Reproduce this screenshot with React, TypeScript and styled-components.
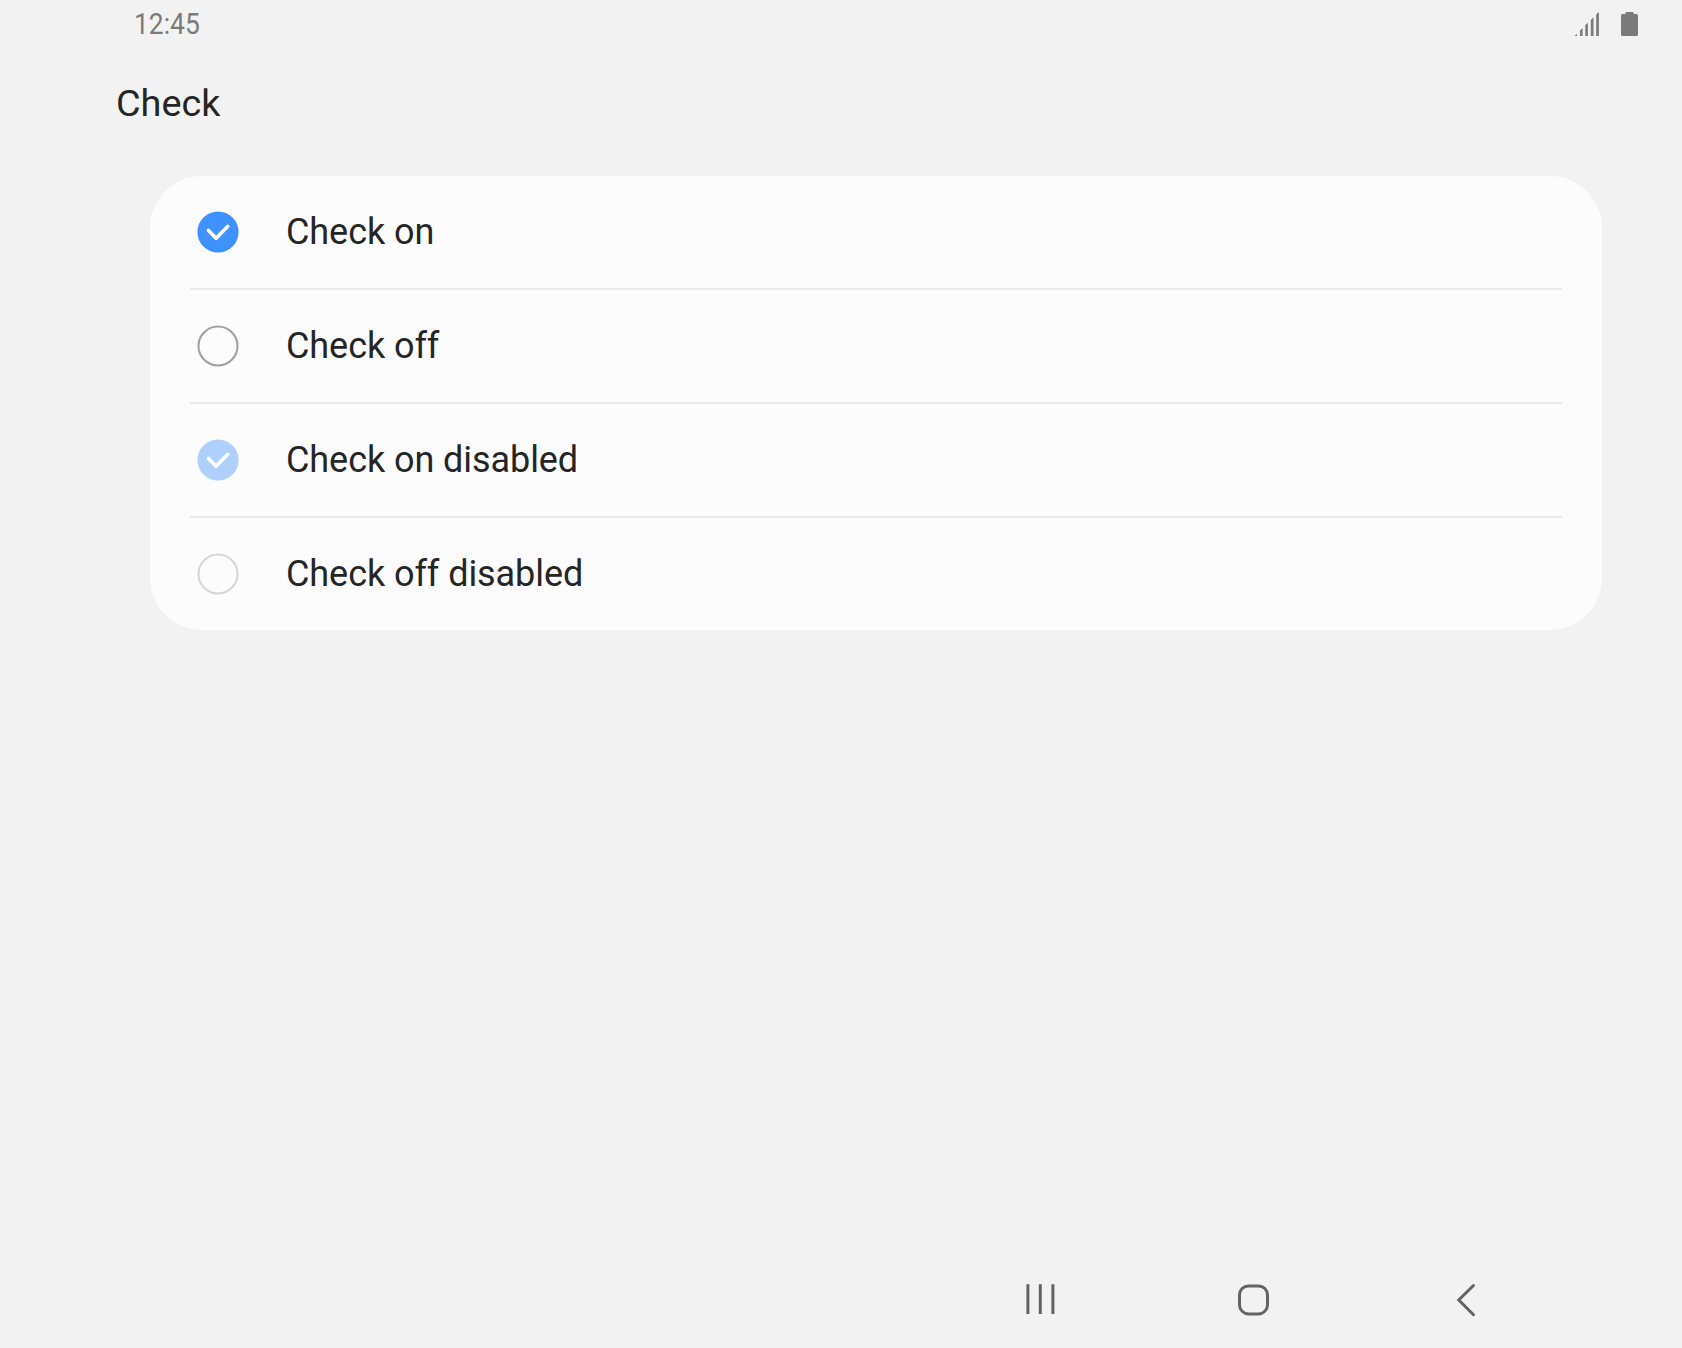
import React from "react";
import styled, { createGlobalStyle } from "styled-components";

const GlobalStyle = createGlobalStyle`
  body { margin: 0; background: #f2f2f2; }
  * { box-sizing: border-box; }
`;

const Screen = styled.div`
  display: flex;
  flex-direction: column;
  width: 100%;
  height: 100vh;
  min-height: 1348px;
  background: #f2f2f2;
  color: #252525;
  font-family: Roboto, "Liberation Sans", sans-serif;
`;

const StatusBar = styled.header`
  display: flex;
  align-items: center;
  justify-content: space-between;
  height: 48px;
  padding: 0 44px 0 134px;
  color: #7a7a7a;
`;

const Clock = styled.time`
  font-size: 30px;
  line-height: 46px;
  transform: scaleX(0.88);
  transform-origin: left center;
`;

const StatusIcons = styled.div`
  display: flex;
  gap: 22px;
`;

const Title = styled.h1`
  margin: 0;
  height: 128px;
  padding: 32px 0 0 116px;
  font-size: 37.8px;
  font-weight: 400;
  line-height: 46px;
`;

const Card = styled.ul`
  list-style: none;
  margin: 0 80px 0 150px;
  padding: 0 40px;
  border-radius: 52px;
  background: #fcfcfc;
`;

const Row = styled.li`
  & + & {
    border-top: 2px solid #e9e9e9;
  }
`;

const Option = styled.label`
  display: flex;
  align-items: center;
  gap: 47px;
  height: 112px;
  padding-left: 7px;
`;

const Mark = styled.svg<{ $disabled: boolean }>`
  flex: none;
  opacity: ${(p) => (p.$disabled ? 0.4 : 1)};
`;

const Label = styled.span`
  font-size: 36px;
  line-height: 44px;
  letter-spacing: -0.07px;
`;

const NavBar = styled.nav`
  display: flex;
  align-items: center;
  justify-content: flex-end;
  gap: 173px;
  height: 96px;
  margin-top: auto;
  padding-right: 196px;
`;

const NavButton = styled.button`
  display: flex;
  padding: 0;
  border: 0;
  background: none;
  color: #636363;
`;

const options = [
  { label: "Check on", checked: true, disabled: false },
  { label: "Check off", checked: false, disabled: false },
  { label: "Check on disabled", checked: true, disabled: true },
  { label: "Check off disabled", checked: false, disabled: true },
];

function CheckMark({ checked, disabled }: { checked: boolean; disabled: boolean }) {
  return (
    <Mark $disabled={disabled} width="42" height="42" viewBox="0 0 42 42" fill="none">
      {checked ? (
        <>
          <circle cx="21" cy="21" r="20.6" fill="#3e91ff" />
          <path
            d="M11.5 19.4 19.1 27.3 30.8 15.3"
            stroke="#fff"
            strokeWidth="3.6"
            strokeLinecap="round"
            strokeLinejoin="round"
          />
        </>
      ) : (
        <circle cx="21" cy="21" r="19.5" stroke="#a0a0a0" strokeWidth="2.1" />
      )}
    </Mark>
  );
}

export default function App() {
  return (
    <>
      <GlobalStyle />
      <Screen>
        <StatusBar>
          <Clock>12:45</Clock>
          <StatusIcons>
            <svg width="25" height="24" viewBox="0 0 25 24" fill="currentColor">
              <path d="M.5 24 3 21.7V24zM6 24V18.5L8.6 16V24zM11.3 24V13.3L13.9 10.7V24zM16.8 24V7.9L19.5 5.2V24zM22.2 24V2.6L24.9 0V24z" />
            </svg>
            <svg width="17" height="24" viewBox="0 0 17 24" fill="currentColor">
              <path d="M5 0H12L13 2H15.4Q17 2 17 3.6V22.4Q17 24 15.4 24H1.6Q0 24 0 22.4V3.6Q0 2 1.6 2H4z" />
            </svg>
          </StatusIcons>
        </StatusBar>
        <Title>Check</Title>
        <Card>
          {options.map((o) => (
            <Row key={o.label}>
              <Option>
                <CheckMark checked={o.checked} disabled={o.disabled} />
                <Label>{o.label}</Label>
              </Option>
            </Row>
          ))}
        </Card>
        <NavBar>
          <NavButton aria-label="Recent apps">
            <svg width="40" height="36" viewBox="0 0 40 36" stroke="currentColor" strokeWidth="3">
              <path d="M7.9 2.2V32M20.3 2.2V32M32.9 2.2V32" />
            </svg>
          </NavButton>
          <NavButton aria-label="Home">
            <svg width="40" height="36" viewBox="0 0 40 36" fill="none" stroke="currentColor" strokeWidth="3">
              <rect x="6.5" y="3.9" width="28" height="28" rx="9" />
            </svg>
          </NavButton>
          <NavButton aria-label="Back">
            <svg width="40" height="36" viewBox="0 0 40 36" fill="none" stroke="currentColor" strokeWidth="3" strokeLinecap="round">
              <path d="M27.5 3.5 12.8 18 27.5 32.7" />
            </svg>
          </NavButton>
        </NavBar>
      </Screen>
    </>
  );
}
